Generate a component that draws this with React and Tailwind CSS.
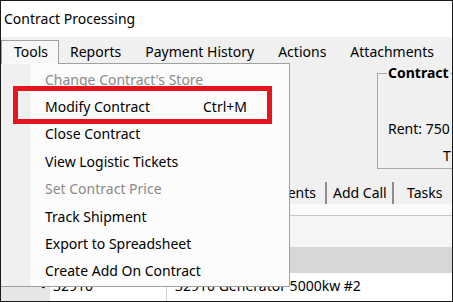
import React from "react";

const menuItems = [
  { label: "Change Contract's Store", disabled: true },
  { label: "Modify Contract", shortcut: "Ctrl+M" },
  { label: "Close Contract" },
  { label: "View Logistic Tickets" },
  { label: "Set Contract Price", disabled: true },
  { label: "Track Shipment" },
  { label: "Export to Spreadsheet" },
  { label: "Create Add On Contract" },
];

const bar = ["Reports", "Payment History", "Actions", "Attachments"];

export default function App() {
  return (
    <div className="relative w-[453px] h-[302px] overflow-hidden border border-[#1a1a1a] bg-[#f0f0f0] flex flex-col font-['Noto_Sans',sans-serif] text-[14px] text-black leading-none">
      {/* title */}
      <div className="h-[36px] shrink-0 bg-white flex items-center pl-[3px]">
        Contract Processing
      </div>
      {/* menubar */}
      <div className="h-[27px] shrink-0 flex items-end">
        <div className="w-[58px] h-[24px] border border-b-0 border-[#a0a0a0] bg-[#f7f7f7] flex items-center pl-[12px] pb-[1px]">
          Tools
        </div>
        <div className="flex items-center h-[24px] pb-[1px] pl-[11px] gap-[24px]">
          {bar.map((b) => (
            <span key={b}>{b}</span>
          ))}
        </div>
      </div>
      {/* content */}
      <div className="flex-1 flex flex-col">
        <div className="h-[105px] shrink-0 flex justify-end pt-[2px]">
          <fieldset className="w-[75px] h-[103px] border border-[#a8a8a8] border-r-0 pl-[10px] pr-0 min-w-0">
            <legend className="font-bold px-[1px] -ml-[1px] whitespace-nowrap">Contract</legend>
            <div className="mt-[42px] whitespace-nowrap">Rent: 750</div>
            <div className="mt-[13px] pl-[55px]">T</div>
          </fieldset>
        </div>
        <div className="h-[13px] shrink-0" />
        {/* tabs */}
        <div className="h-[22px] shrink-0 flex items-stretch">
          <div className="flex-1 flex items-center justify-end pr-[9px] border-r-2 border-[#8c8c8c]">
            Attachments
          </div>
          <div className="w-[67px] flex items-center pl-[6px] border-r-2 border-[#8c8c8c]">Add Call</div>
          <div className="w-[58px] flex items-center pl-[13px]">Tasks</div>
        </div>
        <div className="h-[12px] shrink-0 bg-[#fafafa] border-b border-[#c8c8c8]" />
        <div className="h-[31px] shrink-0 bg-[#f5f5f5]" />
        <div className="h-[26px] shrink-0 bg-[#d7d7d7]" />
        <div className="flex-1 bg-white flex items-stretch">
          <div className="w-[49px] bg-[#e6e6e6] flex items-center justify-end pr-[5px] pb-[3px]">
            <span className="text-[10px]">▪</span>
          </div>
          <div className="w-[117px] pl-[3px] pb-[3px] flex items-center border-r border-[#d0d0d0]">32910</div>
          <div className="pl-[8px] pb-[3px] flex items-center whitespace-nowrap">32910 Generator 5000kw #2</div>
        </div>
      </div>

      {/* dropdown menu */}
      <div className="absolute left-0 top-[62px] w-[289px] h-[224px] bg-[#fcfcfc] border-r border-b border-t border-[#a0a0a0] flex">
        <div className="w-[30px] bg-[#f0f0f0] border-r border-[#f8f8f8]" />
        <div className="flex-1 flex flex-col pt-[2px]">
          {menuItems.map((it) => (
            <div
              key={it.label}
              className={`h-[27.4px] flex items-center pl-[14px] ${it.disabled ? "text-[#8a8a8a]" : "text-black"}`}
            >
              <span className="w-[158px] whitespace-nowrap">{it.label}</span>
              {it.shortcut && <span>{it.shortcut}</span>}
            </div>
          ))}
        </div>
      </div>
      {/* tools tab joins menu */}
      <div className="absolute left-[1px] top-[62px] w-[56px] h-[1px] bg-[#fcfcfc]" />

      {/* red highlight annotation */}
      <div className="absolute left-[12px] top-[85px] w-[259px] h-[38px] border-[5px] border-[#e3161d]" />
    </div>
  );
}
